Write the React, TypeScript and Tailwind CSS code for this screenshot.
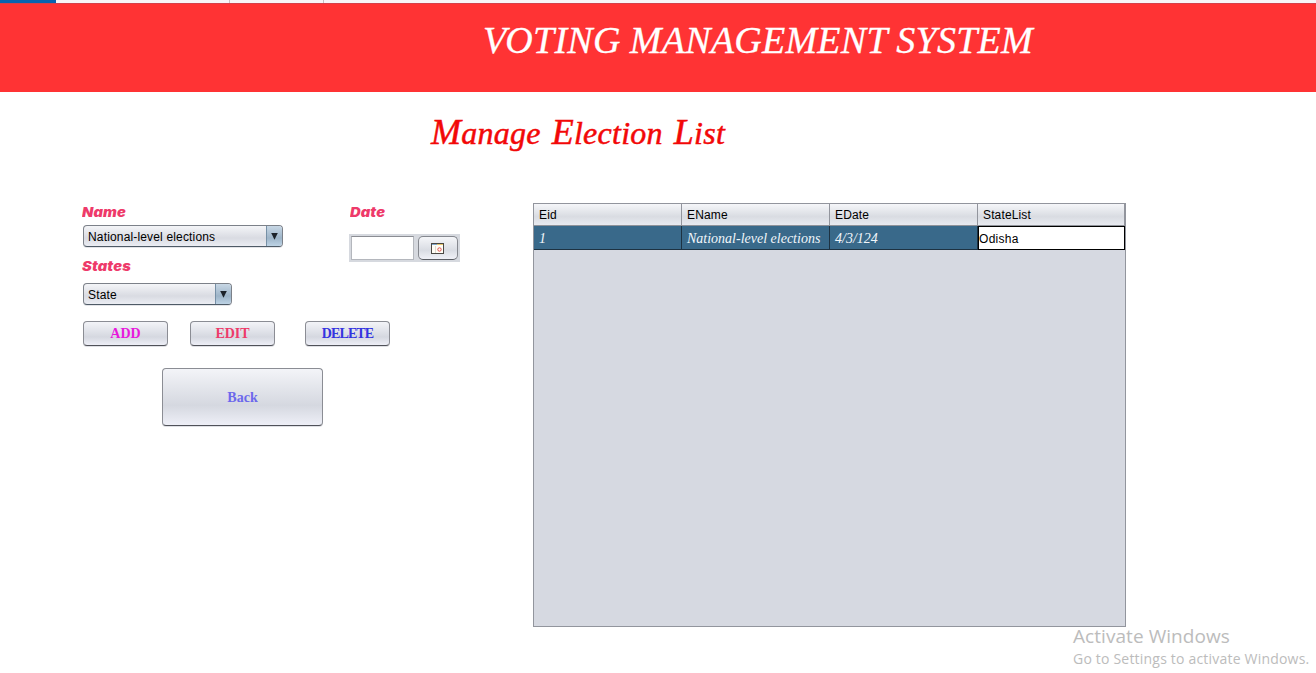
import React from "react";

const serif = "font-['Liberation_Serif',serif]";

function FieldLabel({ children }: { children: React.ReactNode }) {
  return (
    <div className="-ml-px h-4 w-fit origin-left scale-x-[1.13] whitespace-nowrap font-['Inter',sans-serif] text-[13px] leading-4 font-black tracking-[0.1px] text-[#ee3a6a] italic">
      {children}
    </div>
  );
}

function Combo({ value, width }: { value: string; width: string }) {
  return (
    <div
      className={`${width} flex h-[22px] overflow-hidden rounded-[4px] border border-[#7c8189] border-b-[#4e5a66] bg-linear-to-b from-[#f4f5f8] via-[#d9dbe2] via-60% to-[#ebedf3] shadow-[0_1px_0_#e3e4e8]`}
    >
      <span className="flex-1 pl-1 font-['Liberation_Sans',sans-serif] text-[12px] leading-[22px] tracking-[0.16px] whitespace-nowrap text-black">
        {value}
      </span>
      <span className="flex w-4 items-center justify-center border-l border-[#7690a6] bg-linear-to-b from-[#c7d7e5] via-[#9db4c8] via-60% to-[#bdd3e5]">
        <svg width="7" height="7" viewBox="0 0 7 7">
          <path d="M0.2 0H6.8L3.5 6.8Z" fill="#1c2229" />
        </svg>
      </span>
    </div>
  );
}

function PushButton({ children, className }: { children: React.ReactNode; className: string }) {
  return (
    <button
      className={`${className} ${serif} flex items-center justify-center rounded-[4px] border border-[#8b8d94] border-b-[#505259] bg-linear-to-b from-[#f3f4f8] via-[#d5d8e0] via-65% to-[#eeeff7] text-[14px] leading-4 font-bold shadow-[0_1px_0_#dfe0e5]`}
    >
      {children}
    </button>
  );
}

const columns = ["Eid", "EName", "EDate", "StateList"];
const row = ["1", "National-level elections", "4/3/124"];

export default function App() {
  return (
    <div className="relative flex h-[673px] w-[1316px] flex-col overflow-hidden bg-white">
      <div className="flex h-[3px] shrink-0 bg-[#f8f5f8]">
        <div className="w-14 bg-[#0863b0]" />
        <div className="w-[174px] border-r border-[#c4c1c4]" />
        <div className="w-[94px] border-r border-[#c4c1c4]" />
      </div>
      <header className="h-[89px] shrink-0 border-t border-[#d5404a] bg-[#ff3334] pt-[14px] pl-[483px]">
        <h1 className={`${serif} text-[38px] leading-[44px] tracking-[0.25px] whitespace-nowrap text-white italic [word-spacing:-0.5px] [-webkit-text-stroke:0.3px_#ffffff]`}>
          VOTING MANAGEMENT SYSTEM
        </h1>
      </header>
      <main className="flex flex-1 flex-col">
        <h2 className={`${serif} flex h-[111px] gap-[11px] pt-[18px] pl-[431px] text-[32px] leading-[44px] tracking-[0.25px] whitespace-nowrap text-[#f20808] italic [-webkit-text-stroke:0.5px_#f20808]`}>
          {["Manage", "Election", "List"].map((word) => (
            <span key={word} className="block first-letter:text-[36px]">
              {word}
            </span>
          ))}
        </h2>
        <div className="flex">
          <section className="w-[533px] shrink-0 pt-px pl-[83px]">
            <div className="flex">
              <div className="w-[266px]">
                <FieldLabel>Name</FieldLabel>
                <div className="pt-[5px] pb-[11px]">
                  <Combo value="National-level elections" width="w-[200px]" />
                </div>
                <FieldLabel>States</FieldLabel>
                <div className="pt-[9px]">
                  <Combo value="State" width="w-[149px]" />
                </div>
              </div>
              <div>
                <div className="pl-[2px]">
                  <FieldLabel>Date</FieldLabel>
                </div>
                <div className="mt-[14px] flex h-[28px] w-[111px] items-start bg-[#d6d9df] pt-[2px] pl-[2px]">
                  <div className="h-6 w-[63px] border border-[#b4b7bd] border-t-[#8b8d93] bg-white" />
                  <button className="ml-1 flex h-6 w-10 items-center justify-center rounded-[5px] border border-[#85888f] border-b-[#5a5d63] bg-linear-to-b from-[#f5f6f9] via-[#d9dce3] via-60% to-[#f0f1f7] pr-px">
                    <svg width="13" height="11" viewBox="0 0 13 11">
                      <rect x="0.5" y="0.5" width="12" height="10" fill="#fffdf5" stroke="#4a4843" />
                      <path d="M1 1.5H6" stroke="#80a7cb" />
                      <path d="M6 1.5H12" stroke="#e6c66c" />
                      <path d="M4.5 3V10" stroke="#dedbd0" />
                      <circle cx="8.5" cy="6.5" r="1.7" fill="none" stroke="#e44f4b" />
                    </svg>
                  </button>
                </div>
              </div>
            </div>
            <div className="flex pt-4">
              <PushButton className="h-[25px] w-[85px] text-[#e818dc]">ADD</PushButton>
              <PushButton className="ml-[22px] h-[25px] w-[85px] text-[#ee3a6a]">EDIT</PushButton>
              <PushButton className="ml-[30px] h-[25px] w-[85px] tracking-[-0.9px] text-[#3434e0]">DELETE</PushButton>
            </div>
            <div className="pt-[22px] pl-[79px]">
              <PushButton className="h-[58px] w-[161px] pt-[2px] text-[#6c68ec]">Back</PushButton>
            </div>
          </section>
          <section className="h-[424px] w-[593px] border border-[#92959d] bg-[#d6d9e1]">
            <div className="flex h-[22px] border-b border-[#8f9299] bg-linear-to-b from-[#f5f6f9] via-[#d9dce2] via-60% to-[#e8eaf0]">
              {columns.map((name) => (
                <div
                  key={name}
                  className="w-[148px] border-r border-[#92959d] pl-[5px] font-['Liberation_Sans',sans-serif] text-[12px] leading-[22px] tracking-[0.14px] text-black last:w-[147px]"
                >
                  {name}
                </div>
              ))}
            </div>
            <div className="flex h-6">
              {row.map((value) => (
                <div
                  key={value}
                  className={`${serif} w-[148px] border-r border-b border-[#1d3242] bg-[#39698a] pl-[5px] text-[14px] leading-[26px] whitespace-nowrap text-[#f1f6fa] italic`}
                >
                  {value}
                </div>
              ))}
              <div className="w-[147px] border border-black bg-white font-['Liberation_Sans',sans-serif] text-[12px] leading-[24px] tracking-[0.3px] text-black">
                Odisha
              </div>
            </div>
          </section>
        </div>
      </main>
      <aside className="absolute top-[625px] left-[1073px] font-['Open_Sans',sans-serif] whitespace-nowrap text-[#bcbcbc]">
        <div className="text-[19px] leading-[23px] tracking-[0.06px]">Activate Windows</div>
        <div className="text-[14px] leading-[22px] tracking-[0.2px]">Go to Settings to activate Windows.</div>
      </aside>
    </div>
  );
}
